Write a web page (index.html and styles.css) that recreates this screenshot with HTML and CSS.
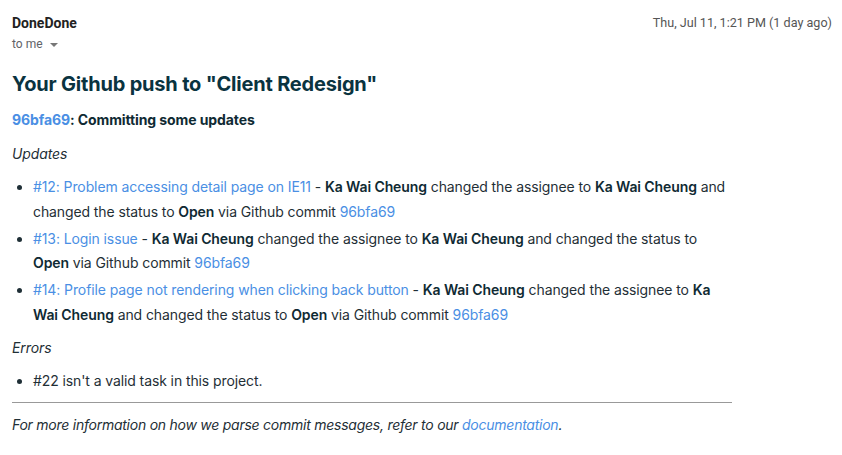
FILE: index.html
```html
<!DOCTYPE html>
<html lang="en">
<head>
    <meta charset="UTF-8">
    <meta name="viewport" content="width=device-width, initial-scale=1.0">
    <title>Your Github push to "Client Redesign"</title>
    <link rel="stylesheet" href="styles.css">
</head>
<body>
    <div class="mail">
        <div class="mail-header">
            <div class="sender">
                <div class="sender-name">DoneDone</div>
                <div class="recipient">to me <span class="caret"></span></div>
            </div>
            <div class="date">Thu, Jul 11, 1:21 PM (1 day ago)</div>
        </div>

        <div class="message">
            <h1 class="title">Your Github push to "Client Redesign"</h1>
            <p class="commit"><a href="#">96bfa69</a>: Committing some updates</p>

            <p class="section">Updates</p>
            <ul class="items">
                <li><a href="#">#12: Problem accessing detail page on IE11</a> - <b>Ka Wai Cheung</b> changed the assignee to <b>Ka Wai Cheung</b> and changed the status to <b>Open</b> via Github commit <a href="#">96bfa69</a></li>
                <li><a href="#">#13: Login issue</a> - <b>Ka Wai Cheung</b> changed the assignee to <b>Ka Wai Cheung</b> and changed the status to <b>Open</b> via Github commit <a href="#">96bfa69</a></li>
                <li><a href="#">#14: Profile page not rendering when clicking back button</a> - <b>Ka Wai Cheung</b> changed the assignee to <b>Ka Wai Cheung</b> and changed the status to <b>Open</b> via Github commit <a href="#">96bfa69</a></li>
            </ul>

            <p class="section">Errors</p>
            <ul class="items">
                <li>#22 isn't a valid task in this project.</li>
            </ul>

            <hr class="rule">
            <p class="footer">For more information on how we parse commit messages, refer to our <a href="#">documentation</a>.</p>
        </div>
    </div>
</body>
</html>
```

FILE: styles.css
```css
body {
    margin: 0;
    background: #fff;
    font-family: Inter, "Noto Sans", sans-serif;
    color: #1f2f36;
}

.mail {
    padding: 14px 10px 0 12px;
}

.mail-header {
    display: flex;
    justify-content: space-between;
    align-items: flex-start;
    font-family: Roboto, Arial, sans-serif;
}

.sender-name {
    font-size: 14px;
    font-weight: bold;
    color: #222;
    line-height: 18px;
}

.recipient {
    font-size: 12px;
    color: #5f6368;
    line-height: 18px;
    margin-top: 3px;
}

.caret {
    display: inline-block;
    width: 0;
    height: 0;
    border-left: 4px solid transparent;
    border-right: 4px solid transparent;
    border-top: 4px solid #777;
    margin-left: 4px;
    vertical-align: middle;
}

.date {
    font-size: 12.6px;
    color: #555;
    line-height: 18px;
}

.message {
    width: 720px;
    font-size: 14px;
    line-height: 25px;
    letter-spacing: -0.1px;
}

.message a {
    color: #4a8fe4;
    text-decoration: none;
}

.title {
    font-size: 20px;
    font-weight: bold;
    color: #0a3340;
    margin: 17px 0 9px;
    line-height: 28px;
    letter-spacing: -0.2px;
}

.commit {
    font-weight: bold;
    color: #0f2a33;
    margin: 0 0 9px;
}

.section {
    font-style: italic;
    margin: 0 0 9px;
}

.items {
    margin: 0 0 8px;
    padding-left: 21px;
}

.items li {
    line-height: 24.5px;
}

.items li + li {
    margin-top: 2.5px;
}

.items b {
    color: #0f2a33;
    font-weight: 600;
}

.rule {
    border: none;
    border-top: 1px solid #999;
    margin: 3px 0 9px;
}

.footer {
    font-style: italic;
    margin: 0;
    letter-spacing: -0.25px;
}
```
